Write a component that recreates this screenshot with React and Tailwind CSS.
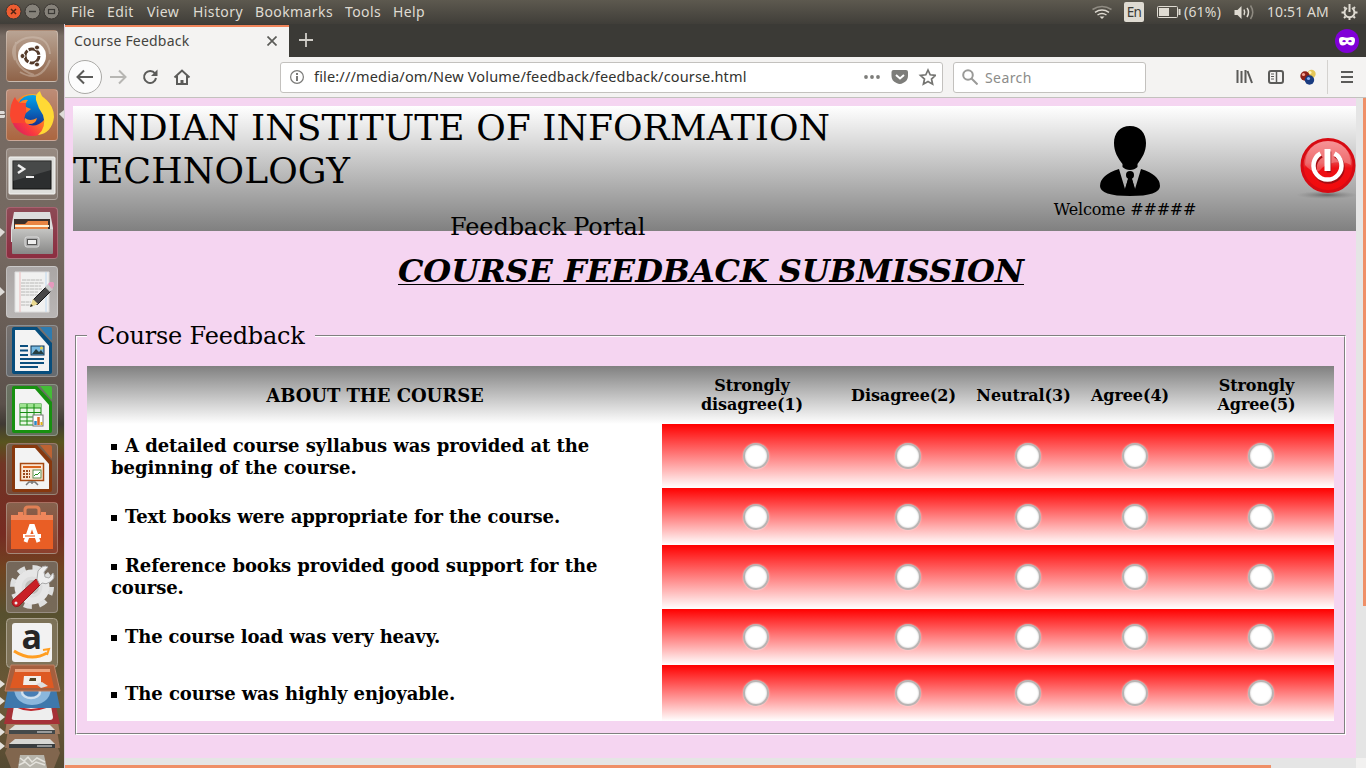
import React from "react";

const UI = "font-['Noto_Sans','Open_Sans',sans-serif]";

function TopBar() {
  const menus = [
    ["File", "w-[36px]"],
    ["Edit", "w-[40px]"],
    ["View", "w-[46px]"],
    ["History", "w-[62px]"],
    ["Bookmarks", "w-[90px]"],
    ["Tools", "w-[48px]"],
    ["Help", "w-[40px]"],
  ];
  return (
    <div className={`flex h-6 shrink-0 items-center bg-linear-to-b/srgb from-[#5d594f] to-[#403e39] text-[14px] leading-6 text-[#dfdbd2] ${UI}`}>
      <svg className="ml-[5px] mr-[5px] h-6 w-[61px] shrink-0" viewBox="5 0 61 24">
        <circle cx="13.5" cy="11.5" r="7.5" fill="#ee5d31" stroke="#3a3632" />
        <path d="M11 9l5 5M16 9l-5 5" stroke="#4f2414" strokeWidth="1.5" />
        <circle cx="32.5" cy="11.5" r="7.5" fill="#86827a" stroke="#3a3632" />
        <path d="M29 11.5h7" stroke="#3b3935" strokeWidth="1.4" />
        <circle cx="51.5" cy="11.5" r="7.5" fill="#86827a" stroke="#3a3632" />
        <rect x="48.5" y="9.5" width="6" height="4" fill="none" stroke="#3b3935" strokeWidth="1.2" />
      </svg>
      {menus.map(([m, w]) => (
        <span key={m} className={`${w} shrink-0 whitespace-nowrap tracking-[0.4px]`}>{m}</span>
      ))}
      <div className="ml-auto flex h-6 items-center">
        <svg className="h-6 w-5" viewBox="1092 0 20 24" fill="none" stroke="#dfdbd2" strokeWidth="1.5">
          <path d="M1092.500 9.500q9.500-6 19 0" stroke="#908c83" />
          <path d="M1095 12.300q7-4.500 14 0M1097.500 15q4.500-3 9 0" />
          <path d="M1099.500 16.500h5l-2.500 2.500z" fill="#dfdbd2" stroke="none" />
        </svg>
        <span className="ml-[12px] flex h-5 w-5 items-center justify-center rounded-[2px] bg-[#dfdbd2] text-[13.500px] tracking-[-0.6px] text-[#3c3b37]">En</span>
        <svg className="ml-[13px] h-6 w-[25px]" viewBox="1157 0 25 24" fill="none" stroke="#dfdbd2">
          <rect x="1157.500" y="6.500" width="20" height="11" rx="1" />
          <path d="M1179.500 9v6" strokeWidth="2" />
          <rect x="1159" y="8" width="10" height="8" fill="#dfdbd2" stroke="none" />
        </svg>
        <span className="ml-[2px] w-[50px] whitespace-nowrap text-[14px] tracking-[0.2px]">(61%)</span>
        <svg className="h-6 w-5" viewBox="1232 0 20 24" fill="none" stroke="#dfdbd2" strokeWidth="1.500">
          <path d="M1232.500 10h3l4-4v13l-4-4h-3z" fill="#dfdbd2" stroke="none" />
          <path d="M1242 9.500q1.500 3 0 5.500M1245 8q3 4 0 9" />
          <path d="M1248.500 5.500q4.500 7 0 13.500" stroke="#8e8a81" />
        </svg>
        <span className="ml-[13px] w-[70px] whitespace-nowrap text-[14px] tracking-[0.1px]">10:51 AM</span>
        <svg className="ml-[4px] mr-[8px] h-6 w-[17px]" viewBox="0 0 17 24" fill="none" stroke="#dfdbd2" strokeWidth="2">
          <path d="M6 8a5 5 0 1 0 5 0M8.500 4v8" />
          <path d="M8.500 17v3M.500 12.500h3M13.500 12.500h3M3 7l1.500 1.500M14 7l-1.500 1.500M3 18l1.500-1.500M14 18l-1.500-1.500" />
        </svg>
      </div>
    </div>
  );
}

const tileBg = [
  "from-[#b9a494] to-[#8f6348]",
  "from-[#bd8c77] to-[#ab6640]",
  "from-[#978a81] to-[#82766e]",
  "from-[#8d4a55] to-[#8c2d40]",
  "from-[#aaa6a5] to-[#b9b6b5]",
  "from-[#77716e] to-[#666b70]",
  "from-[#6b7263] to-[#65705c]",
  "from-[#76614e] to-[#764b3a]",
  "from-[#86624e] to-[#8d3f2c]",
  "from-[#75675a] to-[#776a58]",
];

function OfficeDoc({ c, light, children }) {
  return (
    <>
      <path d="M8 2h23l15 16v29q0 2-2 2H8q-2 0-2-2V4q0-2 2-2z" fill={c} />
      <path d="M34 2h10q2 0 2 2v12z" fill={light} />
      <path d="M9 5h20l14 16v25H9z" fill="#f3f3f3" />
      {children}
    </>
  );
}

const icons = [
  <g key="u">
    <path d="M9 30Q2 14 20 8Q42 4 44 24M14 42q20 12 30-12M10 12q-6 25 18 33" fill="none" stroke="#d4c5b8" strokeOpacity=".45" strokeWidth="2" />
    <circle cx="26" cy="26" r="14" fill="#fff" />
    <circle cx="26" cy="26" r="7" fill="none" stroke="#543a2a" strokeWidth="3" strokeDasharray="13.200 1.460" />
    <g fill="#543a2a" stroke="#fff"><circle cx="16.500" cy="26" r="2.500" /><circle cx="31" cy="17.500" r="2.500" /><circle cx="31" cy="34.500" r="2.500" /></g>
  </g>,
  <g key="f">
    <circle cx="26" cy="26" r="21" fill="url(#fox)" />
    <path d="M4 27Q4 14 9 8q2 5 5 6h6v20L6 34z" fill="#f9462f" />
    <path d="M13 14Q16 6 27 6q8 0 12 10 4 14-6 19-8 4-13-2-3-4 0-9l5-4-5-2q-1-4 2-7-5-1-9 3z" fill="url(#globe)" />
    <path d="M30 11q-1-6 4-9 1 5 5 8 9 7 9 18-2 16-16 18 9-8 5-20-5-7-7-15z" fill="#ffd935" />
    <path d="M19 29q5 4 12 0-1 6-8 6-5 0-4-6z" fill="#ff8a26" />
  </g>,
  <g key="t">
    <rect x="3" y="9" width="46" height="37" rx="1" fill="#dededb" stroke="#f4f4f2" />
    <rect x="7" y="13" width="38" height="28" fill="#2c2e2f" stroke="#111" />
    <path d="M7 13h38v9L7 33z" fill="#fff" fillOpacity=".13" />
    <path d="M12 17l6 4-6 4" fill="none" stroke="#eee" strokeWidth="2.500" /><path d="M20 29h8" stroke="#eee" strokeWidth="2" />
  </g>,
  <g key="n">
    <path d="M8 5h36l3 16v14H5V21z" fill="#ddd" />
    <path d="M8 12h36v10H8z" fill="#3a302c" /><path d="M9 17h10l3-3h20v9H9z" fill="#e98543" /><path d="M9 19h34" stroke="#fff1d5" strokeWidth="2" />
    <rect x="6" y="22" width="41" height="25" rx="1" fill="url(#metal)" />
    <rect x="19" y="30" width="14" height="10" rx="2" fill="#aaa" stroke="#ddd" /><rect x="21.500" y="32.500" width="9" height="5" fill="#eee" stroke="#555" />
  </g>,
  <g key="g">
    <path d="M9 6h34v40H9z" fill="#f1f1f0" stroke="#ddd" />
    <path d="M14 6v40" stroke="#eebbbb" /><path d="M40 6v40" stroke="#bfd8ef" />
    <path d="M16 14h20M15 17h23M15 20h20M15 23h21M15 26h17M15 29h19M15 36h10M15 39h14" stroke="#b8b8b6" strokeDasharray="4 .500" />
    <path d="M27 34l14-14 4 5-14 14z" fill="#484848" stroke="#181818" /><path d="M24 41l3-8 5 5z" fill="#ead98f" /><path d="M24 41l1-3 2 2z" fill="#222" /><path d="M39 21l3-3 5 5-3 3z" fill="#c8c8c8" /><path d="M42 18l2-2h3l1 1v3l-2 3z" fill="#e599bd" />
  </g>,
  <OfficeDoc key="w" c="#074d7c" light="#2e7bb0">
    <path d="M14 21h8M14 25.500h8M14 30h8M14 34h24M14 38h24M14 42h18" stroke="#0b4f7e" strokeWidth="2" />
    <rect x="25" y="21" width="13" height="9" fill="#75b8e1" stroke="#0a3556" /><path d="M26 29l4-5 3 3 2-2 3 4z" fill="#253e41" />
    <circle cx="35.500" cy="23" r="1.500" fill="#ead04a" />
  </OfficeDoc>,
  <OfficeDoc key="c" c="#179010" light="#43bd36">
    <rect x="14" y="20" width="21" height="21" fill="#e8f7e4" stroke="#168c10" />
    <path d="M14 20h21v4H14z" fill="#9ee391" /><path d="M14 24h21M14 28.500h21M14 33h21M14 37h21M21 20v21M28 20v21" stroke="#168c10" />
    <rect x="27" y="31" width="10" height="11" fill="#fff" stroke="#777" /><path d="M29.500 41v-4" stroke="#2b87c7" strokeWidth="2.500" /><path d="M32.500 41v-8" stroke="#dc6620" strokeWidth="2.500" /><path d="M35.500 41v-3" stroke="#e0b516" strokeWidth="2" />
  </OfficeDoc>,
  <OfficeDoc key="i" c="#87380e" light="#bd6333">
    <rect x="14.500" y="20.500" width="23" height="17" fill="#fbe5d2" stroke="#a64812" strokeWidth="1.500" /><path d="M17 24h18" stroke="#d8621c" strokeWidth="2" />
    <path d="M17 28h7M17 31h7M17 34h7" stroke="#9b491e" strokeWidth="2" strokeDasharray="2 1" /><rect x="27" y="27" width="8" height="8" fill="#fff" stroke="#5c8b4d" /><path d="M28 33l2-2 1 1 3-3" fill="none" stroke="#23901d" /><path d="M26 38v3M20 42l3-3h6l3 3" fill="none" stroke="#777" strokeWidth="1.500" />
  </OfficeDoc>,
  <g key="s">
    <path d="M19 14V8q0-3 3-3h8q3 0 3 3v6" fill="none" stroke="#e08055" strokeWidth="3" />
    <path d="M5 13h42v34H5z" fill="#e95e25" /><path d="M5 13h7v-3h5v3h18v-3h5v3h7v5H5z" fill="#ee865b" />
    <path d="M19.500 40l5.500-16h2l5.500 16" fill="none" stroke="#fff" strokeWidth="4" /><path d="M17 34h18" stroke="#fff" strokeWidth="4" /><path d="M19 34h10" stroke="#e95e25" strokeWidth="1.200" />
  </g>,
  <g key="p">
    <circle cx="26" cy="26" r="19.500" fill="none" stroke="#dedfdf" strokeWidth="5" strokeDasharray="8 7.300" /><circle cx="26" cy="26" r="14" fill="#ddd" stroke="#e6e6e6" strokeWidth="7" /><circle cx="26" cy="26" r="7" fill="#bdbdb9" />
    <path d="M7 39l23-21 5 5-22 22q-4 2-6-1t0-5z" fill="#c92026" stroke="#941a1d" /><circle cx="10" cy="42" r="1.500" fill="#eee" /><path d="M31 18l1-8q5-7 10-4l-4 5 1 5 4 1 4-5q3 5-3 9-4 3-8 1l-2 2z" fill="#eee" stroke="#aaa" />
  </g>,
];

function Launcher() {
  return (
    <aside className="relative w-[65px] shrink-0 overflow-hidden border-r border-[#d8ccd8] bg-[linear-gradient(180deg,#4f4640_0,#786c64_12px,#746860_230px,#5b514b_380px,#403a34_400px,#58541f_418px,#713525_440px,#762b22_510px,#704421_545px,#57502f_590px,#6d5938_680px,#554a32_744px)]">
      <svg className="absolute h-0 w-0"><defs>
        <linearGradient id="globe" x2="0" y2="1"><stop stopColor="#00a6ef" /><stop offset="1" stopColor="#123190" /></linearGradient>
        <linearGradient id="fox" x1="1" y1="0" x2="0" y2="1"><stop stopColor="#ffe238" /><stop offset=".4" stopColor="#ff8b20" /><stop offset=".7" stopColor="#fa3940" /><stop offset="1" stopColor="#c8146e" /></linearGradient>
        <linearGradient id="metal" x2="0" y2="1"><stop stopColor="#c4c4c2" /><stop offset="1" stopColor="#888887" /></linearGradient>
      </defs></svg>
      <div className="flex flex-col gap-[7px] pl-[6px] pt-[6px]">
        {icons.map((icon, i) => (
          <div key={i} className={`h-[52px] w-[52px] shrink-0 rounded-[4px] border border-white/25 bg-linear-to-b/srgb ${tileBg[i]}`}>
            <svg className="h-[50px] w-[50px]" viewBox="1 1 50 50">{icon}</svg>
          </div>
        ))}
      </div>
      <svg className="mt-[3px] h-[152px] w-[64px] overflow-visible" viewBox="0 616 64 152">
        <rect x="6.500" y="618.500" width="51" height="49" rx="4" fill="#8c806a" fillOpacity=".7" stroke="#aaa18e" />
        <rect x="12" y="623" width="40" height="39" rx="3" fill="#f2f2f2" />
        <text x="21.500" y="649" fontFamily="Open Sans, sans-serif" fontWeight="700" fontSize="34" fill="#262626">a</text>
        <path d="M14 651q17 11 33 2" fill="none" stroke="#ff9e22" strokeWidth="3" /><path d="M43 650l6-1-2 6" fill="none" stroke="#ff9e22" strokeWidth="2" />
        <path d="M11 738h43l6 15-6 15H11l-6-15z" fill="#81664e" /><path d="M20 755h24l3 13H18z" fill="#b7b4ab" /><path d="M20 758l4 3 4-4 4 5 5-4 8 4M19 765l6-3 5 4 6-4 9 3" fill="none" stroke="#e4e2dc" strokeWidth="1.500" />
        <path d="M9 724h47l4 24H5z" fill="#947057" /><path d="M15 739h35l5 5v4H9v-4z" fill="#d7d7d4" /><path d="M9 744h46v4H9z" fill="#393d3f" /><path d="M37 746h15" stroke="#eee" />
        <path d="M8 711h48l4 23H5z" fill="#a17a5e" /><path d="M15 725h35l5 5v4H9v-4z" fill="#dfdfdc" /><path d="M9 730h46v4H9z" fill="#44494a" /><path d="M37 732h15" stroke="#eee" />
        <path d="M10 698h44l6 26H4z" fill="#a53137" /><path d="M16 695h33l4 22q0 3-3 3H14q-3 0-2-3z" fill="#eee" /><path d="M18 707q12 6 28 0" stroke="#bd282e" strokeWidth="2" fill="none" />
        <path d="M10 679h44l6 29H4z" fill="#3e78ac" /><path d="M14 682h37q2 22-19 23-20-1-18-23z" fill="#8bb7dc" /><ellipse cx="31" cy="692" rx="9" ry="6" fill="#477eb4" stroke="#d0e1ef" strokeWidth="2.500" />
        <path d="M11 665h43l6 26H5z" fill="#a65f3e" stroke="#bd8165" /><path d="M15 670h35l4 18H10z" fill="#de5922" /><path d="M15 669h35v3H15z" fill="#eca27d" /><path d="M24 676h17v9H23z" fill="#f1eeea" /><path d="M30 678h6v3h-7z" fill="#504424" /><path d="M36 684l6-2 6 4-7 2z" fill="#ddd" />
        <path d="M0 680l5 4-5 4zM0 697l5 4-5 4zM0 713l5 4-5 4zM0 728l5 4-5 4zM0 742l5 4-5 4z" fill="#e4e1dc" />
      </svg>
      <svg className="absolute left-0 top-0 h-[744px] w-[64px]" viewBox="0 24 64 744" fill="#dedbd7">
        <path d="M0 111h4l1 2-1 1H0zM0 115h5v2l-1 1H0zM64 110l-5 4 5 5zM0 228l5 4-5 5zM0 287l5 5-5 4z" />
      </svg>
    </aside>
  );
}

function BrowserChrome() {
  return (
    <div className={`flex shrink-0 flex-col ${UI}`}>
      <div className="flex h-[33px] bg-[#3b3a36] pt-px">
        <div className="flex w-[224px] items-center border-t-2 border-[#f0845a] bg-[#f4f3f2] pb-[3px] pl-[9px] pr-[12px] text-[14px] text-[#44443f]">
          <span className="whitespace-nowrap tracking-[0.2px]">Course Feedback</span>
          <svg className="ml-auto h-[10px] w-[10px]" viewBox="0 0 10 10" stroke="#5c5c59" strokeWidth="1.700"><path d="M.500.500l9 9M9.500.500l-9 9" /></svg>
        </div>
        <svg className="ml-[10px] mt-[8px] h-[14px] w-[14px]" viewBox="0 0 14 14" stroke="#d0cec8" strokeWidth="1.800"><path d="M7 0v14M0 7h14" /></svg>
        <svg className="ml-auto mr-[7px] mt-[4px] h-6 w-6" viewBox="0 0 24 24"><circle cx="12" cy="12" r="12" fill="#8000d7" /><path fillRule="evenodd" fill="#fff" d="M4 11q0-3.500 4-3 4 1.500 8 0 4-.5 4 3 0 5.500-4 5.500-2 0-4-2-2 2-4 2-4 0-4-5.500zm3 1.200q2.500 2 4 0-1.500-2.500-4 0zm6 0q2 2 4 0-2-2.500-4 0z" /></svg>
      </div>
      <div className="flex h-[41px] items-center border-b border-[#c3c1be] bg-[#f4f3f2]">
        <svg className="h-10 w-[215px] shrink-0" viewBox="65 57 215 40" fill="none" stroke="#5b5b59" strokeWidth="2">
          <circle cx="85" cy="77" r="16.500" fill="#fcfcfc" stroke="#aaa9a6" strokeWidth="1" />
          <path d="M93 77H78.500M84 70.500L77.500 77l6.500 6.500" />
          <path d="M110 77h14.500M119 70.500l6.500 6.500-6.500 6.500" stroke="#b7b6b3" />
          <path d="M155 73.500a6 6 0 1 0 1 4.500" /><path d="M157.500 69.500v6.500H151z" fill="#5b5b59" stroke="none" />
          <path d="M174.500 77.500l7.500-7 7.500 7M177 76v8h10v-8" /><path d="M182 84v-4" strokeWidth="3" />
        </svg>
        <div className="flex h-[31px] w-[663px] shrink-0 items-center rounded-[3px] border border-[#c3c1be] bg-white">
          <svg className="ml-[9px] h-[14px] w-[14px]" viewBox="0 0 14 14"><circle cx="7" cy="7" r="6.400" fill="none" stroke="#7b7b79" strokeWidth="1.200" /><path d="M7 3v2M7 6v5" stroke="#6c6c6a" strokeWidth="1.800" /></svg>
          <span className="ml-[10px] whitespace-nowrap text-[14.500px] tracking-[0.16px] text-[#33332f]">file:///media/om/New Volume/feedback/feedback/course.html</span>
          <svg className="ml-auto mr-[6px] h-5 w-[73px]" viewBox="863 67 73 20"><g fill="#7d7d7a"><circle cx="866" cy="77" r="1.900" /><circle cx="872" cy="77" r="1.900" /><circle cx="878" cy="77" r="1.900" /><path d="M893.500 70h12.500q2 0 2 2v4q0 5-5 7-3 2-6.500 0-5-2-5-7v-4q0-2 2-2z" /></g><path d="M896 75l4 3.500 4-3.500" stroke="#fff" strokeWidth="2" fill="none" /><path d="M928 70l2.200 4.800 5.300.6-4 3.600 1.100 5.200-4.600-2.600-4.600 2.600 1.100-5.200-4-3.600 5.300-.6z" fill="none" stroke="#747471" strokeWidth="1.700" /></svg>
        </div>
        <div className="ml-[10px] flex h-[31px] w-[193px] shrink-0 items-center rounded-[3px] border border-[#c3c1be] bg-white">
          <svg className="ml-[8px] h-4 w-4" viewBox="0 0 16 16" fill="none" stroke="#9a9a98" strokeWidth="2"><circle cx="6" cy="6" r="4.800" /><path d="M9.500 9.500l6 6" /></svg>
          <span className="ml-[7px] text-[14px] tracking-[0.4px] text-[#8c8c89]">Search</span>
        </div>
        <svg className="ml-auto h-10 w-[130px]" viewBox="1236 57 130 40" fill="none" stroke="#5b5b59" strokeWidth="2">
          <path d="M1237 70v13M1241 71v12M1245 70v13M1247 71l4.500 12" transform="translate(.500 0)" />
          <rect x="1269" y="71" width="14" height="12" rx="2" /><path d="M1276.500 71v12" strokeWidth="1.500" /><path d="M1271 74h3M1271 76.500h3M1271 79h3" strokeWidth="1" />
          <g stroke="none" transform="translate(.500 0)"><circle cx="1311" cy="74" r="4.200" fill="#e4c75a" /><circle cx="1309.500" cy="72.500" r="1.500" fill="#fff3ba" /><circle cx="1304.500" cy="76" r="4.700" fill="#8e2117" /><circle cx="1303" cy="74.500" r="1.600" fill="#f6a496" /><circle cx="1309" cy="80" r="4.700" fill="#193b80" /><circle cx="1308" cy="78.500" r="1.600" fill="#86b0f3" /></g>
          <path d="M1327.500 60v34" stroke="#d4d2cf" strokeWidth="1" /><path d="M1341 72h12M1341 77h12M1341 82h12" />
        </svg>
      </div>
    </div>
  );
}

function Banner() {
  return (
    <header className="flex h-[125px] bg-linear-to-b/srgb from-white to-[#808080]">
      <div className="w-[830px] shrink-0">
        <h1 className="h-[86px] text-[36px] leading-[43px] tracking-[0.04px]"><span className="ml-5 whitespace-nowrap">INDIAN INSTITUTE OF INFORMATION</span><br /><span className="tracking-[0.15px]">TECHNOLOGY</span></h1>
        <p className="mt-[21px] pl-[377px] text-[24px] leading-7 tracking-[-0.12px]">Feedback Portal</p>
      </div>
      <div className="ml-[151px] flex w-[142px] flex-col items-center pt-[20px]">
        <svg className="ml-[10px] h-[70px] w-[60px] shrink-0" viewBox="0 0 60 70">
          <path d="M30 0C20 0 14 7 14 17c0 9 4 15 8.500 21v3q3 3 7.500 3t7.500-3v-3c4.500-6 8.500-12 8.500-21C46 7 40 0 30 0z" />
          <path d="M19 43Q0 49 0 60q0 10 30 10 30 0 30-10 0-11-19-17l-6 20-5-17-5 17z" />
          <circle cx="30" cy="49" r="4" /><path d="M29 50h2l5 17h-12z" />
        </svg>
        <p className="mt-[4px] whitespace-nowrap text-[16px] leading-5 tracking-[-0.2px]">Welcome #####</p>
      </div>
      <svg className="ml-auto mt-[30px] h-[64px] w-[60px]" viewBox="1296 136 60 64">
        <defs><linearGradient id="pwr" x2="0" y2="1"><stop stopColor="#f57478" /><stop offset=".45" stopColor="#e93b3e" /><stop offset=".55" stopColor="#ed1015" /><stop offset="1" stopColor="#f30a0c" /></linearGradient><radialGradient id="shade"><stop stopColor="#666" /><stop offset="1" stopColor="#888" stopOpacity="0" /></radialGradient></defs>
        <ellipse cx="1327" cy="195" rx="31" ry="4" fill="url(#shade)" />
        <circle cx="1328" cy="165.500" r="26" fill="url(#pwr)" stroke="#d70b13" strokeWidth="3" />
        <path d="M1305 165q1-23 23-24 22 1 23 24-5-3-10-3-15 0-22 9-6 3-14-6z" fill="#fff" fillOpacity=".25" />
        <g fill="none" strokeWidth="4.500"><path d="M1320.500 154a14 14 0 1 0 14 0M1328 150v21" stroke="#a30c12" transform="translate(1 1.500)" /><path d="M1320.500 153.500a14 14 0 1 0 14 0" stroke="#fff" /><path d="M1327.500 149v22" stroke="#fff" strokeWidth="6" /></g>
      </svg>
    </header>
  );
}

const rows = [
  ["h-[64px] pt-px", "tracking-[-0.05px]", "A detailed course syllabus was provided at the beginning of the course."],
  ["h-[57px]", "tracking-[-0.13px]", "Text books were appropriate for the course."],
  ["h-[64px]", "tracking-[-0.09px]", "Reference books provided good support for the course."],
  ["h-[56px]", "tracking-[-0.16px]", "The course load was very heavy."],
  ["h-[56px] pt-px", "tracking-[-0.08px]", "The course was highly enjoyable."],
];
const ratings = ["Strongly disagree(1)", "Disagree(2)", "Neutral(3)", "Agree(4)", "Strongly Agree(5)"];
const cols = "grid grid-cols-[180px_122px_118px_96px_156px] items-center justify-items-center";

function FeedbackTable() {
  return (
    <section className="relative ml-[2px] mr-[10px] mt-[44px] h-[400px] border border-b-white border-l-[#808080] border-r-white border-t-[#808080]">
      <h3 className="absolute left-[11px] top-[-14px] w-[228px] bg-[#f5d5f1] pl-[10px] text-[24px] leading-7 tracking-[-0.2px]">Course Feedback</h3>
      <div className="h-full border border-b-[#808080] border-l-white border-r-[#808080] border-t-white pl-[10px] pr-[10px] pt-[29px] font-bold">
        <div className="flex h-[58px] bg-linear-to-b/srgb from-[#808080] to-white">
          <div className="flex w-[575px] items-center justify-center pl-px text-[18px] tracking-[-0.05px]">ABOUT THE COURSE</div>
          <div className={`${cols} text-center text-[16px] leading-[19px] tracking-[-0.07px]`}>
            {ratings.map((r, i) => <div key={r} className={i === 0 ? "w-[110px]" : i === 4 ? "ml-px w-[110px]" : i === 3 ? "" : "ml-px"}>{r}</div>)}
          </div>
        </div>
        {rows.map(([h, track, q]) => (
          <div key={q} className="flex bg-white">
            <div className={`flex w-[575px] shrink-0 items-center pl-6 pr-[50px] text-[18px] leading-[22px] ${h}`}>
              <p className={track}><span className="mr-2 inline-block h-[6px] w-[6px] bg-black align-[2px]" />{q}</p>
            </div>
            <div className={`${cols} bg-linear-to-b/srgb from-[#ff0000] to-white`}>
              {ratings.map((r, i) => <span key={r} className={`${i === 0 ? "ml-[8px]" : "ml-[10px]"} h-[26px] w-[26px] rounded-full border-2 border-[#b9b4b3] bg-white shadow-[0_0_2px_#ffffff90,inset_0_0_2px_#bbb]`} />)}
            </div>
          </div>
        ))}
      </div>
    </section>
  );
}

export default function App() {
  return (
    <div className="flex h-[768px] w-[1366px] flex-col overflow-hidden bg-[#f5d5f1] text-black">
      <TopBar />
      <div className="flex h-[744px]">
        <Launcher />
        <div className="flex w-[1301px] flex-col">
          <BrowserChrome />
          <div className="flex h-[660px]">
            <main className="w-[1291px] pl-2 pt-2 font-['DejaVu_Serif',serif]">
              <Banner />
              <h2 className="mt-[20px] w-full pr-[7px] text-center text-[32px] font-bold italic leading-10 tracking-[-0.08px] underline decoration-1 underline-offset-2">COURSE FEEDBACK SUBMISSION</h2>
              <FeedbackTable />
            </main>
            <div className="flex w-[10px] justify-end bg-[#e5e5e5]"><div className="h-[508px] w-[3px] bg-[#ef8f67]" /></div>
          </div>
          <div className="flex h-[10px] items-end bg-[#e5e5e5]"><div className="h-[3px] w-[1206px] bg-[#ef8f67]" /><div className="ml-auto h-[10px] w-[10px] bg-[#f2f1f0]" /></div>
        </div>
      </div>
    </div>
  );
}
